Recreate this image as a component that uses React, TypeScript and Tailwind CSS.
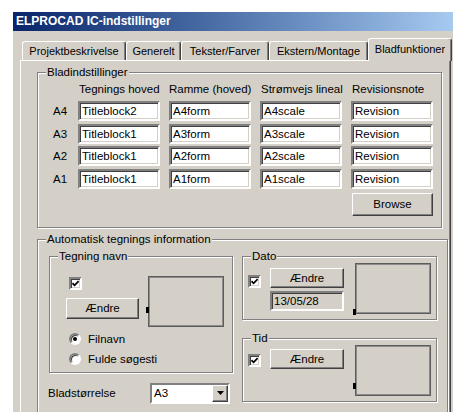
import React from "react";

// classic 3D border recipes
const sunken =
  "border-2 border-t-[#808080] border-l-[#808080] border-b-white border-r-white shadow-[inset_1px_1px_0_#404040,inset_-1px_-1px_0_#d4d0c8]";
const raised =
  "border border-t-white border-l-white border-b-[#404040] border-r-[#404040] shadow-[inset_-1px_-1px_0_#808080]";
const etched = "border border-[#808080] shadow-[1px_1px_0_#fff,inset_1px_1px_0_#fff]";

const tabs = [
  { label: "Projektbeskrivelse", w: "w-[104px]" },
  { label: "Generelt", w: "w-[55px]" },
  { label: "Tekster/Farver", w: "w-[88px]" },
  { label: "Ekstern/Montage", w: "w-[99px]" },
];

const sheets = [
  { size: "A4", head: "Titleblock2", frame: "A4form", scale: "A4scale" },
  { size: "A3", head: "Titleblock1", frame: "A3form", scale: "A3scale" },
  { size: "A2", head: "Titleblock1", frame: "A2form", scale: "A2scale" },
  { size: "A1", head: "Titleblock1", frame: "A1form", scale: "A1scale" },
];

const cols = "grid grid-cols-[16px_82px_82px_82px_82px] gap-x-[9px]";

function Group({ title, className, children }: { title: string; className?: string; children: React.ReactNode }) {
  return (
    <fieldset className={`${etched} ${className ?? ""}`}>
      <legend className="ml-[8px] px-[1px] leading-[13px] bg-[#d4d0c8]">{title}</legend>
      {children}
    </fieldset>
  );
}

function Field({ value }: { value: string }) {
  return <div className={`h-[20px] bg-white pl-[2px] leading-[16px] whitespace-nowrap ${sunken}`}>{value}</div>;
}

function Button({ label, className }: { label: string; className?: string }) {
  return <div className={`flex items-center justify-center ${raised} ${className ?? ""}`}>{label}</div>;
}

function Check() {
  return (
    <span className={`flex w-[13px] h-[13px] items-center justify-center bg-white ${sunken}`}>
      <svg width="7" height="7" viewBox="0 0 7 7">
        <path d="M0.5 3.2 L2.6 5.3 L6.6 1.2" stroke="black" strokeWidth="1.7" fill="none" />
      </svg>
    </span>
  );
}

function Radio({ checked }: { checked?: boolean }) {
  return (
    <span className="flex w-[12px] h-[12px] items-center justify-center rounded-full bg-white border-2 border-t-[#808080] border-l-[#808080] border-b-white border-r-white shadow-[inset_1px_1px_0_#404040]">
      {checked && <span className="block w-[4px] h-[4px] rounded-full bg-black" />}
    </span>
  );
}

function Preview({ marker }: { marker: string }) {
  return (
    <div className="relative w-[76px] h-[51px] shrink-0 border border-[#5c5c5c] shadow-[inset_1px_1px_0_#8c8c8c,inset_-1px_-1px_0_#8c8c8c]">
      <span className={`absolute left-[-3px] w-[3px] h-[6px] bg-black ${marker}`} />
    </div>
  );
}

export default function App() {
  return (
    <div className="w-[460px] h-[412px] bg-white overflow-hidden pl-[13px] pt-[12px] text-[11.5px] leading-[14px] text-black [font-family:'Liberation_Sans',Arial,sans-serif]">
      <div className="w-[440px] h-[400px] bg-[#d4d0c8] flex flex-col overflow-hidden">
        <div className="h-[19px] shrink-0 pl-[3px] bg-gradient-to-r from-[#0a246a] to-[#a6caf0] text-white font-bold text-[12px] leading-[19px]">
          ELPROCAD IC-indstillinger
        </div>

        <div className="pl-[7px] pt-[7px] flex-1 flex flex-col">
          {/* tab strip */}
          <div className="flex items-end pl-[2px] text-[11px]">
            {tabs.map((t) => (
              <div
                key={t.label}
                className={`${t.w} h-[19px] flex items-center justify-center rounded-t-[3px] border-l border-t border-white border-r border-r-[#404040] shadow-[inset_-1px_0_0_#808080]`}
              >
                {t.label}
              </div>
            ))}
            <div className="relative z-10 w-[84px] h-[23px] -mb-[1px] flex items-center justify-center pb-[2px] bg-[#d4d0c8] rounded-t-[3px] border-l border-t border-white border-r border-r-[#404040] shadow-[inset_-1px_0_0_#808080]">
              Bladfunktioner
            </div>
          </div>

          {/* page */}
          <div className="w-[431px] flex-1 border-t border-l border-white border-r border-r-[#404040] shadow-[inset_-1px_0_0_#808080] pl-[16px] pt-[5px]">
            <Group title="Bladindstillinger" className="w-[405px]">
              <div className="pl-[15px] pr-[8px] pb-[11px]">
                <div className={`${cols} mt-[3px] h-[14px] whitespace-nowrap`}>
                  <span />
                  <span className="pl-[1px]">Tegnings hoved</span>
                  <span>Ramme (hoved)</span>
                  <span className="pl-[1px]">Strømvejs lineal</span>
                  <span className="pl-[1px]">Revisionsnote</span>
                </div>
                <div className="mt-[5px] flex flex-col gap-y-[2.5px]">
                  {sheets.map((s) => (
                    <div key={s.size} className={`${cols} items-center`}>
                      <span>{s.size}</span>
                      <Field value={s.head} />
                      <Field value={s.frame} />
                      <Field value={s.scale} />
                      <Field value="Revision" />
                    </div>
                  ))}
                </div>
                <div className="flex justify-end mt-[4px]">
                  <Button label="Browse" className="w-[81px] h-[23px]" />
                </div>
              </div>
            </Group>

            <Group title="Automatisk tegnings information" className="w-[411px] mt-[5px]">
              <div className="flex gap-[9px] pl-[11px] mt-[4px] pb-[12px]">
                {/* drawing name */}
                <div className="w-[184px] shrink-0">
                  <Group title="Tegning navn" className="w-full">
                    <div className="flex items-start mt-[13px] pl-[16px]">
                      <div className="flex flex-col">
                        <div className="ml-[3px] mt-[1px]">
                          <Check />
                        </div>
                        <Button label="Ændre" className="w-[73px] h-[21px] mt-[8px]" />
                      </div>
                      <div className="ml-[9px]">
                        <Preview marker="top-[30px]" />
                      </div>
                    </div>
                    <div className="mt-[2px] pl-[19px] pb-[3px]">
                      <label className="h-[20px] flex items-center gap-[7px]">
                        <Radio checked />
                        Filnavn
                      </label>
                      <label className="h-[20px] flex items-center gap-[7px]">
                        <Radio />
                        Fulde søgesti
                      </label>
                    </div>
                  </Group>

                  <div className="flex items-center mt-[10px]">
                    <span className="w-[102px] -ml-[1px]">Bladstørrelse</span>
                    <div className={`w-[80px] h-[21px] bg-white flex items-center justify-between pl-[2px] ${sunken} shadow-none`}>
                      <span>A3</span>
                      <span className={`w-[16px] h-[17px] flex items-center justify-center bg-[#d4d0c8] ${raised}`}>
                        <svg width="7" height="4" viewBox="0 0 7 4">
                          <path d="M0 0 H7 L3.5 4 Z" fill="black" />
                        </svg>
                      </span>
                    </div>
                  </div>
                </div>

                {/* date and time */}
                <div className="w-[195px] shrink-0">
                  <Group title="Dato" className="w-full">
                    <div className="flex items-start pl-[5px] pb-[5px]">
                      <div className="mt-[12px]">
                        <Check />
                      </div>
                      <div className="ml-[9px] flex flex-col">
                        <Button label="Ændre" className="w-[74px] h-[20px] mt-[5px]" />
                        <div className={`w-[74px] h-[20px] mt-[3px] pl-[2px] leading-[16px] bg-[#d4d0c8] ${sunken}`}>13/05/28</div>
                      </div>
                      <div className="ml-[11px]">
                        <Preview marker="top-[45px] h-[5px]" />
                      </div>
                    </div>
                  </Group>

                  <Group title="Tid" className="w-full mt-[12px]">
                    <div className="flex items-start pl-[5px] pb-[5px]">
                      <div className="mt-[9px]">
                        <Check />
                      </div>
                      <Button label="Ændre" className="w-[74px] h-[20px] mt-[4px] ml-[9px]" />
                      <div className="ml-[11px]">
                        <Preview marker="top-[37px]" />
                      </div>
                    </div>
                  </Group>
                </div>
              </div>
            </Group>
          </div>
        </div>
      </div>
    </div>
  );
}
